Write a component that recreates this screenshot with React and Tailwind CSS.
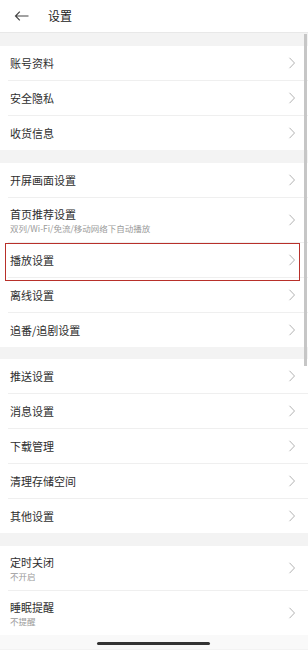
import React from 'react';

const font = { fontFamily: '"Noto Sans CJK SC", "Noto Sans", sans-serif' };

function Chevron() {
  return (
    <svg width="8" height="12" viewBox="0 0 8 12" className="flex-shrink-0">
      <polyline points="1.5,0.8 6.5,6 1.5,11.2" fill="none" stroke="#a8a8a8" strokeWidth="0.9" />
    </svg>
  );
}

function Row({ title, sub, tall, highlight, last }) {
  return (
    <div className="relative">
      <div className={`flex items-center justify-between pl-[10px] pr-[12px] ${tall ? 'h-[44px]' : 'h-[34px]'}`}>
        <div className="flex flex-col">
          <span className="text-[11px] leading-[14px] text-[#2e2e2e]">{title}</span>
          {sub && <span className="text-[8.5px] leading-[11px] mt-[2px] text-[#9a9a9a]">{sub}</span>}
        </div>
        <Chevron />
      </div>
      {!last && <div className="ml-[8px] h-px bg-[#efefef]" />}
      {highlight && (
        <div className="absolute left-[5px] right-[8px] top-0 h-[38px] border-[1.5px] border-[#b8302a]" />
      )}
    </div>
  );
}

function Group({ items }) {
  return (
    <div className="bg-white">
      {items.map((it, i) => (
        <Row key={it.title} {...it} last={i === items.length - 1} />
      ))}
    </div>
  );
}

export default function App() {
  return (
    <div className="relative w-[308px] h-[650px] overflow-hidden bg-[#f3f3f3]" style={font}>
      <div className="h-[33px] bg-white flex items-center border-b border-[#e8e8e8]">
        <svg width="16" height="12" viewBox="0 0 16 12" className="ml-[14px]">
          <path d="M14.5 6H1.5M5.8 1.6L1.5 6l4.3 4.4" fill="none" stroke="#444" strokeWidth="1.2" />
        </svg>
        <span className="ml-[18px] text-[12px] text-[#222]">设置</span>
      </div>
      <div className="h-[13px]" />
      <Group items={[{ title: '账号资料' }, { title: '安全隐私' }, { title: '收货信息' }]} />
      <div className="h-[13px]" />
      <Group
        items={[
          { title: '开屏画面设置' },
          { title: '首页推荐设置', sub: '双列/Wi-Fi/免流/移动网络下自动播放', tall: true },
          { title: '播放设置', highlight: true },
          { title: '离线设置' },
          { title: '追番/追剧设置' },
        ]}
      />
      <div className="h-[12px]" />
      <Group
        items={[
          { title: '推送设置' },
          { title: '消息设置' },
          { title: '下载管理' },
          { title: '清理存储空间' },
          { title: '其他设置' },
        ]}
      />
      <div className="h-[13px]" />
      <Group
        items={[
          { title: '定时关闭', sub: '不开启', tall: true },
          { title: '睡眠提醒', sub: '不提醒', tall: true },
        ]}
      />
      <div className="h-[14px] bg-[#f9f9f9]" />
      <div className="absolute right-[1px] top-[34px] w-[3px] h-[332px] bg-[#c6c6c6]" />
      <div className="absolute left-[97px] bottom-[5px] w-[113px] h-[3px] rounded-full bg-[#333]" />
    </div>
  );
}
